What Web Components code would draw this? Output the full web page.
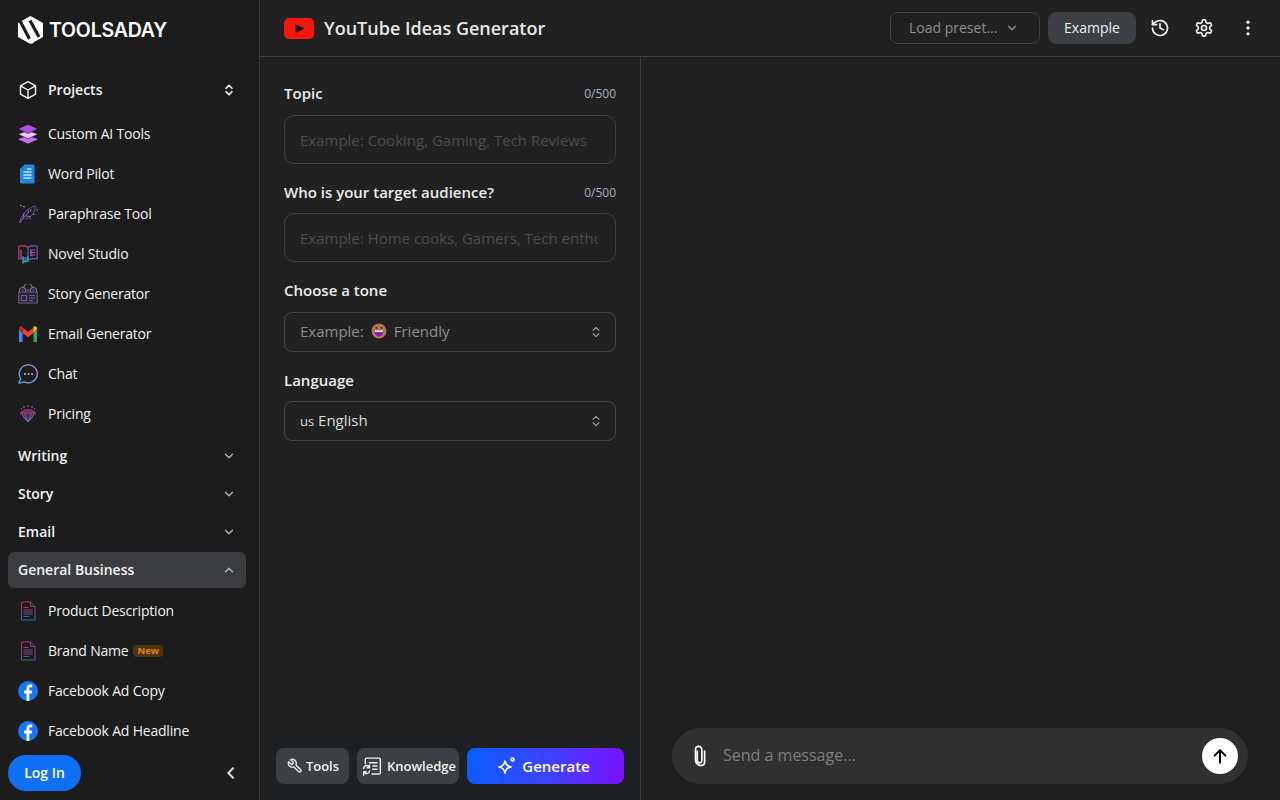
<!DOCTYPE html>
<html><head><meta charset="utf-8"><title>YouTube Ideas Generator</title>
<style>
html,body{margin:0;height:100%;background:#212121;overflow:hidden}
body{font-family:"Open Sans","Noto Sans",sans-serif;color:#f2f2f2}
</style></head><body>
<ta-app>
  <ta-sidebar slot="sidebar"></ta-sidebar>
  <ta-header slot="header"></ta-header>
  <ta-form slot="form"></ta-form>
  <ta-chat slot="chat"></ta-chat>
</ta-app>
<script>
const chev='<svg width="14" height="14" viewBox="0 0 24 24" fill="none" stroke="currentColor" stroke-width="2.600" stroke-linecap="round" stroke-linejoin="round"><path d="M6 9l6 6 6-6"/></svg>';
const chevUp='<svg width="14" height="14" viewBox="0 0 24 24" fill="none" stroke="currentColor" stroke-width="2.600" stroke-linecap="round" stroke-linejoin="round"><path d="M6 15l6-6 6 6"/></svg>';
const updown='<svg width="14" height="16" viewBox="0 0 24 24" fill="none" stroke="currentColor" stroke-width="2" stroke-linecap="round" stroke-linejoin="round"><path d="M7 9l5-5 5 5M7 15l5 5 5-5"/></svg>';
const docIcon=id=>`<svg width="20" height="20" viewBox="0 0 20 20" fill="none"><defs><linearGradient id="${id}" x1="0" y1="0" x2="0" y2="1"><stop offset="0" stop-color="#c2305f"/><stop offset=".6" stop-color="#7a4a8a"/><stop offset="1" stop-color="#2d6f9e"/></linearGradient></defs><path d="M3.500 1h9l4.500 4.500V19H3.500z" stroke="url(#${id})" stroke-width="1" stroke-linejoin="round"/><path d="M12.500 1v4.500H17" stroke="url(#${id})" stroke-width="1"/><path d="M5.500 6.500h5M5.500 9h9M5.500 11h9M5.500 13h9M5.500 15.500h6" stroke="url(#${id})" stroke-width="1.100"/></svg>`;
const fb='<svg width="20" height="20" viewBox="0 0 20 20"><circle cx="10" cy="10" r="10" fill="#1877f2"/><path d="M11.300 20v-7.600h2.500l.4-2.900h-2.900V7.700c0-.9.3-1.400 1.500-1.400h1.500V3.700c-.4-.1-1.200-.1-2.100-.1-2.200 0-3.700 1.300-3.700 3.800v2.100H6v2.900h2.500V20z" fill="#fff"/></svg>';
const icons={
 custom:'<svg width="20" height="20" viewBox="0 0 20 20"><path d="M10 11.500 0 15.300l10 4.500 10-4.500z" fill="#c56cf0"/><path d="M10 6.500 0 10.200l10 4.500 10-4.500z" fill="#f0c4ff" stroke="#1e1e1e" stroke-width=".6"/><path d="M10 .5 0 4.800l10 4.700 10-4.700z" fill="#b44fe8" stroke="#1e1e1e" stroke-width=".6"/></svg>',
 word:'<svg width="20" height="20" viewBox="0 0 20 20"><path d="M6.500 .5h8.500A1.500 1.500 0 0 1 16.500 2v16a1.500 1.500 0 0 1-1.500 1.500H3.500A1.500 1.500 0 0 1 2 18V5z" fill="#1e88e5"/><path d="M5.500 8h8M5.500 11h8M5.500 14h8M9 5h4.500" stroke="#bfe3ff" stroke-width="1.300"/></svg>',
 para:'<svg width="20" height="20" viewBox="0 0 20 20" fill="none" stroke-width="1"><path d="M1.500 19C3 12 7 5 17.500 2c-.5 6-4 12-10.500 13" stroke="#6f4fa8"/><path d="M1.500 19l9-11M5 15l1-6M8 12l5 .5M10.500 8.500 10 5.500M13 5l-.5 3" stroke="#8c6bc9"/><circle cx="3" cy="1.500" r=".7" fill="#bbb"/><circle cx="19" cy="6" r=".7" fill="#bbb"/><path d="M5 2.500l2 .5M15 10l1.500.5M12 14.500l1 .5" stroke="#a59ab5"/></svg>',
 novel:'<svg width="20" height="20" viewBox="0 0 20 20" fill="none" stroke-width="1.100"><path d="M10 3.500C8 1.800 4 1.300 .8 2.200V15c2-.5 3.500-.5 5 0" stroke="#c33d72"/><path d="M10 3.500c2-1.700 6-2.200 9.200-1.300V15c-3-.8-6-.4-9 1" stroke="#8a52a8"/><path d="M10 3.500V16" stroke="#5a6cc0"/><path d="M3 5.500v9M12 6h5M12 8.500h5M12 11h5M13 6v6" stroke="#a15cc4"/><path d="M5 12v7l1.500-1.500H10V12M5.500 14h4M5.500 16h4" stroke="#3aa6d8"/></svg>',
 story:'<svg width="20" height="20" viewBox="0 0 20 20" fill="none" stroke="#6e5a96" stroke-width="1.100"><path d="M.8 8h18.400v11H.8z" fill="#2a2535"/><path d="M1.500 8V5l3-2 3 2v3M6 3.500a4 4 0 0 1 8 0M12.500 8V5l3-2 3 2v3" stroke="#7f7485"/><path d="M3.500 11.500h5v5h-5zM11 11.500h6M11 14h6M11 16.500h4"/><path d="M3.500 6h2M8.500 6h3M14.500 6h2" stroke="#7f7485"/></svg>',
 gmail:'<svg width="20" height="20" viewBox="0 0 20 20"><path d="M1 18h3.500V9L1 5z" fill="#4285f4"/><path d="M15.500 18H19V5l-3.500 4z" fill="#34a853"/><path d="M15.500 3.500 10 8 4.500 3.500V9l5.500 4.300L15.500 9z" fill="#ea4335"/><path d="M1 5v-.5C1 2.300 3.200 1.600 4.500 2.600V9z" fill="#c5221f"/><path d="M19 5v-.5c0-2.200-2.200-2.900-3.500-1.900V9z" fill="#fbbc04"/></svg>',
 chat:'<svg width="20" height="20" viewBox="0 0 20 20" fill="none"><defs><linearGradient id="cg" x1="0" y1="1" x2="1" y2="0"><stop offset="0" stop-color="#39b7e8"/><stop offset="1" stop-color="#c879e0"/></linearGradient></defs><path d="M10.500 .8a9 9 0 1 1-4.300 17l-5.200 1.300 1.600-4.600A9 9 0 0 1 10.500 .8z" stroke="url(#cg)" stroke-width="1.300" stroke-linejoin="round"/><circle cx="7" cy="10" r=".9" fill="#cfc8e8"/><circle cx="10.500" cy="10" r=".9" fill="#cfc8e8"/><circle cx="14" cy="10" r=".9" fill="#cfc8e8"/></svg>',
 pricing:'<svg width="20" height="20" viewBox="0 0 20 20" fill="none" stroke-width="1"><path d="M2.500 9 6 6h8l3.500 3L10 18z" fill="#6a2347" stroke="#c8385f"/><path d="M2.500 9h15M6.500 9 10 18l3.500-9" stroke="#3f6fb8"/><path d="M10 18 6 13.500M10 18l4-4.500" stroke="#3f86c8"/><path d="M6 2v2M10 1v2M14 2v2M3 4.500h1M16 4.500h1" stroke="#a668d8"/></svg>'
};

class TaApp extends HTMLElement{constructor(){super();this.attachShadow({mode:'open'}).innerHTML=`<style>
:host{display:grid;grid-template-columns:260px 381px 1fr;grid-template-rows:57px 1fr;height:800px;width:1280px}
::slotted([slot=sidebar]){grid-row:1/3}
::slotted([slot=header]){grid-column:2/4}
</style><slot name="sidebar"></slot><slot name="header"></slot><slot name="form"></slot><slot name="chat"></slot>`}}

class TaNavItem extends HTMLElement{constructor(){super();this.attachShadow({mode:'open'}).innerHTML=`<style>
:host{display:flex;align-items:center;gap:10px;height:40px;padding-left:18px;font-size:14px;color:#f2f2f2;letter-spacing:-.2px}
.i{width:20px;height:20px;display:flex;flex:none}
.t{display:flex;align-items:center;padding-bottom:2px}
</style><span class="i"><slot name="icon"></slot></span><span class="t"><slot></slot></span>`}}

class TaSection extends HTMLElement{constructor(){super();const open=this.hasAttribute('open');this.attachShadow({mode:'open'}).innerHTML=`<style>
:host{display:flex;align-items:center;justify-content:space-between;height:36px;margin:0 13px 0 8px;padding:0 10px;border-radius:6px;font-size:14px;font-weight:600;color:#f5f5f5}
:host([open]){background:#3a3c3f}
.x{padding-bottom:2px}
.c{display:flex;color:#a9adb2}
</style><span class="x"><slot></slot></span><span class="c">${open?chevUp:chev}</span>`}}

class TaSidebar extends HTMLElement{constructor(){super();
const item=(ic,t,extra='')=>`<ta-nav-item><span slot="icon" style="display:flex">${ic}</span>${t}${extra}</ta-nav-item>`;
this.attachShadow({mode:'open'}).innerHTML=`<style>
:host{display:flex;flex-direction:column;height:800px;box-sizing:border-box;background:#1c1c1d;border-right:1px solid #3a3a3a;overflow:hidden}
.logo{display:flex;align-items:center;gap:6px;height:70px;padding-bottom:10px;box-sizing:border-box;flex:none;padding-left:18px;font-size:19.500px;font-weight:600;letter-spacing:-.2px;color:#fff;font-family:"Inter","Open Sans",sans-serif}
.proj{display:flex;align-items:center;gap:10px;height:40px;flex:none;padding:0 23px 0 18px;margin-bottom:4px;font-size:14px;font-weight:600}
.proj b{flex:1;font-weight:600;padding-bottom:2px}
.proj svg.s{color:#e8e8e8}
nav{flex:1;min-height:0;overflow:hidden;display:flex;flex-direction:column}
.secs{display:flex;flex-direction:column;gap:2px;margin:4px 0 3px;letter-spacing:0}
ta-nav-item{flex:none}
.new{display:inline-block;margin-left:5px;padding:0 4px;border-radius:4px;background:#4a3414;color:#e8820c;font-size:9.500px;font-weight:700;line-height:12px;letter-spacing:0;margin-top:2px}
footer{display:flex;align-items:center;justify-content:space-between;flex:none;height:36px;padding:4px 20px 9px 8px}
.login{display:flex;align-items:center;justify-content:center;box-sizing:border-box;width:73px;height:36px;padding-bottom:2px;border-radius:18px;background:#0f70f5;color:#fff;font-size:14px;font-weight:600}
.col{display:flex;color:#d8d8d8}
</style>
<div class="logo"><svg width="25" height="28" viewBox="0 0 25 28"><path d="M12.500 0 25 7v14l-12.500 7L0 21V7z" fill="#fff"/><path d="M1 3 11.500 23M12 4.500 21 21" stroke="#1c1c1d" stroke-width="3.200" fill="none"/><path d="M11.500 23 15 27" stroke="#fff" stroke-width="2"/></svg><span>TOOLSADAY</span></div>
<div class="proj"><svg width="20" height="20" viewBox="0 0 24 24" fill="none" stroke="#f0f0f0" stroke-width="1.700" stroke-linejoin="round"><path d="M12 2l9 5v10l-9 5-9-5V7z"/><path d="M3 7l9 5 9-5M12 12v10"/></svg><b>Projects</b><svg class="s" width="14" height="16" viewBox="0 0 24 24" fill="none" stroke="currentColor" stroke-width="3" stroke-linecap="round" stroke-linejoin="round"><path d="M7 9l5-5 5 5M7 15l5 5 5-5"/></svg></div>
<nav>
${item(icons.custom,'Custom AI Tools')}
${item(icons.word,'Word Pilot')}
${item(icons.para,'Paraphrase Tool')}
${item(icons.novel,'Novel Studio')}
${item(icons.story,'Story Generator')}
${item(icons.gmail,'Email Generator')}
${item(icons.chat,'Chat')}
${item(icons.pricing,'Pricing')}
<div class="secs"><ta-section>Writing</ta-section><ta-section>Story</ta-section><ta-section>Email</ta-section><ta-section open>General Business</ta-section></div>
${item(docIcon('d1'),'Product Description')}
${item(docIcon('d2'),'Brand Name','<span class="new">New</span>')}
${item(fb,'Facebook Ad Copy')}
${item(fb,'Facebook Ad Headline')}
</nav>
<footer><span class="login">Log In</span><span class="col"><svg width="16" height="16" viewBox="0 0 24 24" fill="none" stroke="currentColor" stroke-width="3.200" stroke-linecap="round" stroke-linejoin="round"><path d="M15 5l-7 7 7 7"/></svg></span></footer>`}}

class TaHeader extends HTMLElement{constructor(){super();this.attachShadow({mode:'open'}).innerHTML=`<style>
:host{display:flex;align-items:center;box-sizing:border-box;height:57px;padding:0 22px 0 24px;border-bottom:1px solid #3f3f3f;background:#212121}
.t{display:flex;align-items:center;gap:10px;flex:1;font-size:18px;font-weight:600;color:#e8e8e8}
.preset{display:flex;align-items:center;justify-content:space-between;box-sizing:border-box;width:150px;height:32px;padding:0 20px 0 18px;border:1px solid #3f4245;border-radius:8px;color:#8a8f94;font-size:14px}
.preset span{padding-bottom:2px}
.ex{display:flex;align-items:center;justify-content:center;box-sizing:border-box;width:88px;height:32px;padding-bottom:2px;margin-left:8px;border-radius:8px;background:#3c3f43;color:#f0f0f0;font-size:14px;font-weight:500}
.ib{display:flex;align-items:center;justify-content:center;width:20px;height:20px;margin-left:24px;color:#f0f0f0}
</style>
<div class="t"><svg width="30" height="21" viewBox="0 0 30 21"><rect width="30" height="21" rx="5" fill="#f5160c"/><path d="M11.500 6 20.500 10.500 11.500 15z" fill="#1a1a1a"/></svg><span>YouTube Ideas Generator</span></div>
<div class="preset"><span>Load preset...</span>${chev}</div>
<div class="ex">Example</div>
<div class="ib" style="margin-left:14px"><svg width="20" height="20" viewBox="0 0 24 24" fill="none" stroke="currentColor" stroke-width="2" stroke-linecap="round" stroke-linejoin="round"><path d="M3 12a9 9 0 1 0 3-6.700L3 8"/><path d="M3 3v5h5M12 7v5l4 2"/></svg></div>
<div class="ib"><svg width="20" height="20" viewBox="0 0 24 24" fill="none" stroke="currentColor" stroke-width="2" stroke-linecap="round" stroke-linejoin="round"><path d="M12.200 2h-.4a2 2 0 0 0-2 2v.2a2 2 0 0 1-1 1.700l-.4.300a2 2 0 0 1-2 0l-.2-.1a2 2 0 0 0-2.700.7l-.2.4a2 2 0 0 0 .7 2.700l.2.100a2 2 0 0 1 1 1.700v.5a2 2 0 0 1-1 1.700l-.2.100a2 2 0 0 0-.7 2.700l.2.4a2 2 0 0 0 2.700.7l.2-.1a2 2 0 0 1 2 0l.4.300a2 2 0 0 1 1 1.700v.2a2 2 0 0 0 2 2h.4a2 2 0 0 0 2-2v-.2a2 2 0 0 1 1-1.700l.4-.3a2 2 0 0 1 2 0l.2.100a2 2 0 0 0 2.700-.7l.2-.4a2 2 0 0 0-.7-2.700l-.2-.1a2 2 0 0 1-1-1.700v-.5a2 2 0 0 1 1-1.700l.2-.1a2 2 0 0 0 .7-2.700l-.2-.4a2 2 0 0 0-2.700-.7l-.2.100a2 2 0 0 1-2 0l-.4-.3a2 2 0 0 1-1-1.700V4a2 2 0 0 0-2-2z"/><circle cx="12" cy="12" r="3"/></svg></div>
<div class="ib"><svg width="20" height="20" viewBox="0 0 24 24" fill="currentColor"><circle cx="12" cy="5" r="2"/><circle cx="12" cy="12" r="2"/><circle cx="12" cy="19" r="2"/></svg></div>`}}

class TaField extends HTMLElement{constructor(){super();const c=this.getAttribute('count');this.attachShadow({mode:'open'}).innerHTML=`<style>
:host{display:block}
.l{display:flex;align-items:center;justify-content:space-between;height:22px;margin-bottom:var(--lg,10px);font-size:15px;font-weight:600;color:#ececec}
.c{font-size:12px;font-weight:400;color:#a6aec4}
</style><div class="l"><span>${this.getAttribute('label')}</span>${c?`<span class="c">${c}</span>`:''}</div><slot></slot>`}}

class TaInput extends HTMLElement{constructor(){super();this.attachShadow({mode:'open'}).innerHTML=`<style>
:host{display:flex;align-items:center;box-sizing:border-box;height:49px;padding:0 17px 0 15px;border:1px solid #3f4245;border-radius:10px;background:#212121;color:#4a4c4f;font-size:15px;white-space:nowrap}
span{display:block;overflow:hidden;padding:2px 0}
</style><span><slot></slot></span>`}}

class TaSelect extends HTMLElement{constructor(){super();this.attachShadow({mode:'open'}).innerHTML=`<style>
:host{display:flex;align-items:center;justify-content:space-between;box-sizing:border-box;height:40px;padding:0 12px 0 15px;border:1px solid #45484b;border-radius:8px;font-size:15px}
.a{display:flex;color:#9a9da1}
div{display:flex;align-items:center;padding-bottom:2px}
</style><div><slot></slot></div><span class="a">${updown}</span>`}}

class TaForm extends HTMLElement{constructor(){super();this.attachShadow({mode:'open'}).innerHTML=`<style>
:host{display:flex;flex-direction:column;height:743px;box-sizing:border-box;border-right:1px solid #3f3f3f;background:#212121}
.f{flex:1;display:flex;flex-direction:column;padding:25px 24px 0;gap:17px}
.bar{display:flex;align-items:center;gap:8px;height:72px;padding:4px 16px 0;background:#1f2022;box-sizing:border-box;flex:none}
.b{display:flex;align-items:center;justify-content:center;height:36px;border-radius:8px;background:#3c3f43;color:#f0f0f0;font-size:13px;font-weight:600;box-sizing:border-box}
.g{flex:1;background:linear-gradient(90deg,#0a5cff 0%,#3a44ff 50%,#7a12ff 100%);font-size:15px;gap:5px;padding-right:4px;color:#fff}
</style>
<div class="f">
<ta-field label="Topic" count="0/500" style="--lg:11px"><ta-input>Example: Cooking, Gaming, Tech Reviews</ta-input></ta-field>
<ta-field label="Who is your target audience?" count="0/500"><ta-input>Example: Home cooks, Gamers, Tech enthusiasts</ta-input></ta-field>
<ta-field label="Choose a tone" style="--lg:11px"><ta-select><span style="color:#8d8d8d;display:flex;align-items:center;gap:7px;font-weight:500">Example: <svg width="16" height="16" viewBox="0 0 16 16"><circle cx="8" cy="8" r="7.500" fill="#b27a50"/><path d="M3.500 7.500h9c0 3.500-2 6-4.500 6s-4.500-2.500-4.500-6z" fill="#8c1fa8"/><path d="M4 7.500h8v1.500H4z" fill="#fff"/><circle cx="5.500" cy="5" r="1" fill="#3a2414"/><circle cx="10.500" cy="5" r="1" fill="#3a2414"/></svg><span style="margin-left:0">Friendly</span></span></ta-select></ta-field>
<ta-field label="Language"><ta-select><span style="color:#dcdcdc"><span style="font-size:13px">us</span> English</span></ta-select></ta-field>
</div>
<div class="bar">
<div class="b" style="width:73px;gap:3px;padding-left:1px"><svg width="16" height="16" viewBox="0 0 24 24" fill="none" stroke="currentColor" stroke-width="2" stroke-linecap="round" stroke-linejoin="round"><path d="M14.700 6.300a1 1 0 0 0 0 1.400l1.600 1.600a1 1 0 0 0 1.400 0l3.800-3.800a6 6 0 0 1-7.900 7.900l-6.900 6.900a2.100 2.100 0 0 1-3-3l6.900-6.900a6 6 0 0 1 7.900-7.900z" transform="matrix(-1 0 0 1 24 0)"/></svg>Tools</div>
<div class="b" style="width:102px;gap:5px;padding-left:2px"><svg width="20" height="20" viewBox="0 0 24 24" fill="none" stroke="currentColor" stroke-width="1.700" stroke-linecap="round" stroke-linejoin="round"><path d="M4 9V4a1.500 1.500 0 0 1 1.500-1.500h15A1.500 1.500 0 0 1 22 4v16a1.500 1.500 0 0 1-1.500 1.500H12"/><path d="M9 8h9M13 12h5M13 16h5M2 15a3.500 3.500 0 0 1 6-2.500l1 1M9 11v3H6M9 18a3.500 3.500 0 0 1-6 2l-1-1M2 23v-4h3"/></svg>Knowledge</div>
<div class="b g"><svg width="20" height="20" viewBox="0 0 20 20" fill="none" stroke="#fff" stroke-width="1.700" stroke-linejoin="round"><path d="M9 4c.6 3.600 2.400 5.400 6 6-3.600.6-5.400 2.400-6 6-.6-3.600-2.400-5.400-6-6 3.600-.6 5.400-2.400 6-6z" transform="translate(-1 1)"/><circle cx="15.500" cy="3.500" r="1.400"/></svg>Generate</div>
</div>`}}

class TaChat extends HTMLElement{constructor(){super();this.attachShadow({mode:'open'}).innerHTML=`<style>
:host{display:flex;flex-direction:column;justify-content:flex-end;height:743px;background:#212121}
.w{margin:0 16px 0 15px;height:88px;padding:16px;box-sizing:border-box;background:#1e1e1e}
.c{display:flex;align-items:center;height:56px;border-radius:28px;background:#303030;padding:0 10px 0 19px;gap:13px;color:#7f7f7f;font-size:16px}
.t{flex:1;padding-bottom:2px}
.s{display:flex;align-items:center;justify-content:center;width:36px;height:36px;border-radius:50%;background:#fff;color:#000}
svg{display:block;flex:none}
</style>
<div class="w"><div class="c"><svg width="19" height="22" viewBox="0 0 18 24" fill="none" stroke="#fff" stroke-width="1.800" stroke-linecap="round"><path d="M7 7v10.500a2.500 2.500 0 0 0 5 0V5.500a3.500 3.500 0 0 0-7 0V17a6 6 0 0 0 9 5 6 6 0 0 0 1-4V7" transform="translate(-1.500 -.5)"/></svg><span class="t">Send a message...</span><span class="s"><svg width="20" height="20" viewBox="0 0 24 24" fill="none" stroke="currentColor" stroke-width="2.400" stroke-linecap="round" stroke-linejoin="round"><path d="M12 20V5M5.500 11.500 12 5l6.500 6.500"/></svg></span></div></div>`}}

customElements.define('ta-app',TaApp);
customElements.define('ta-nav-item',TaNavItem);
customElements.define('ta-section',TaSection);
customElements.define('ta-sidebar',TaSidebar);
customElements.define('ta-header',TaHeader);
customElements.define('ta-field',TaField);
customElements.define('ta-input',TaInput);
customElements.define('ta-select',TaSelect);
customElements.define('ta-form',TaForm);
customElements.define('ta-chat',TaChat);
</script></body></html>
